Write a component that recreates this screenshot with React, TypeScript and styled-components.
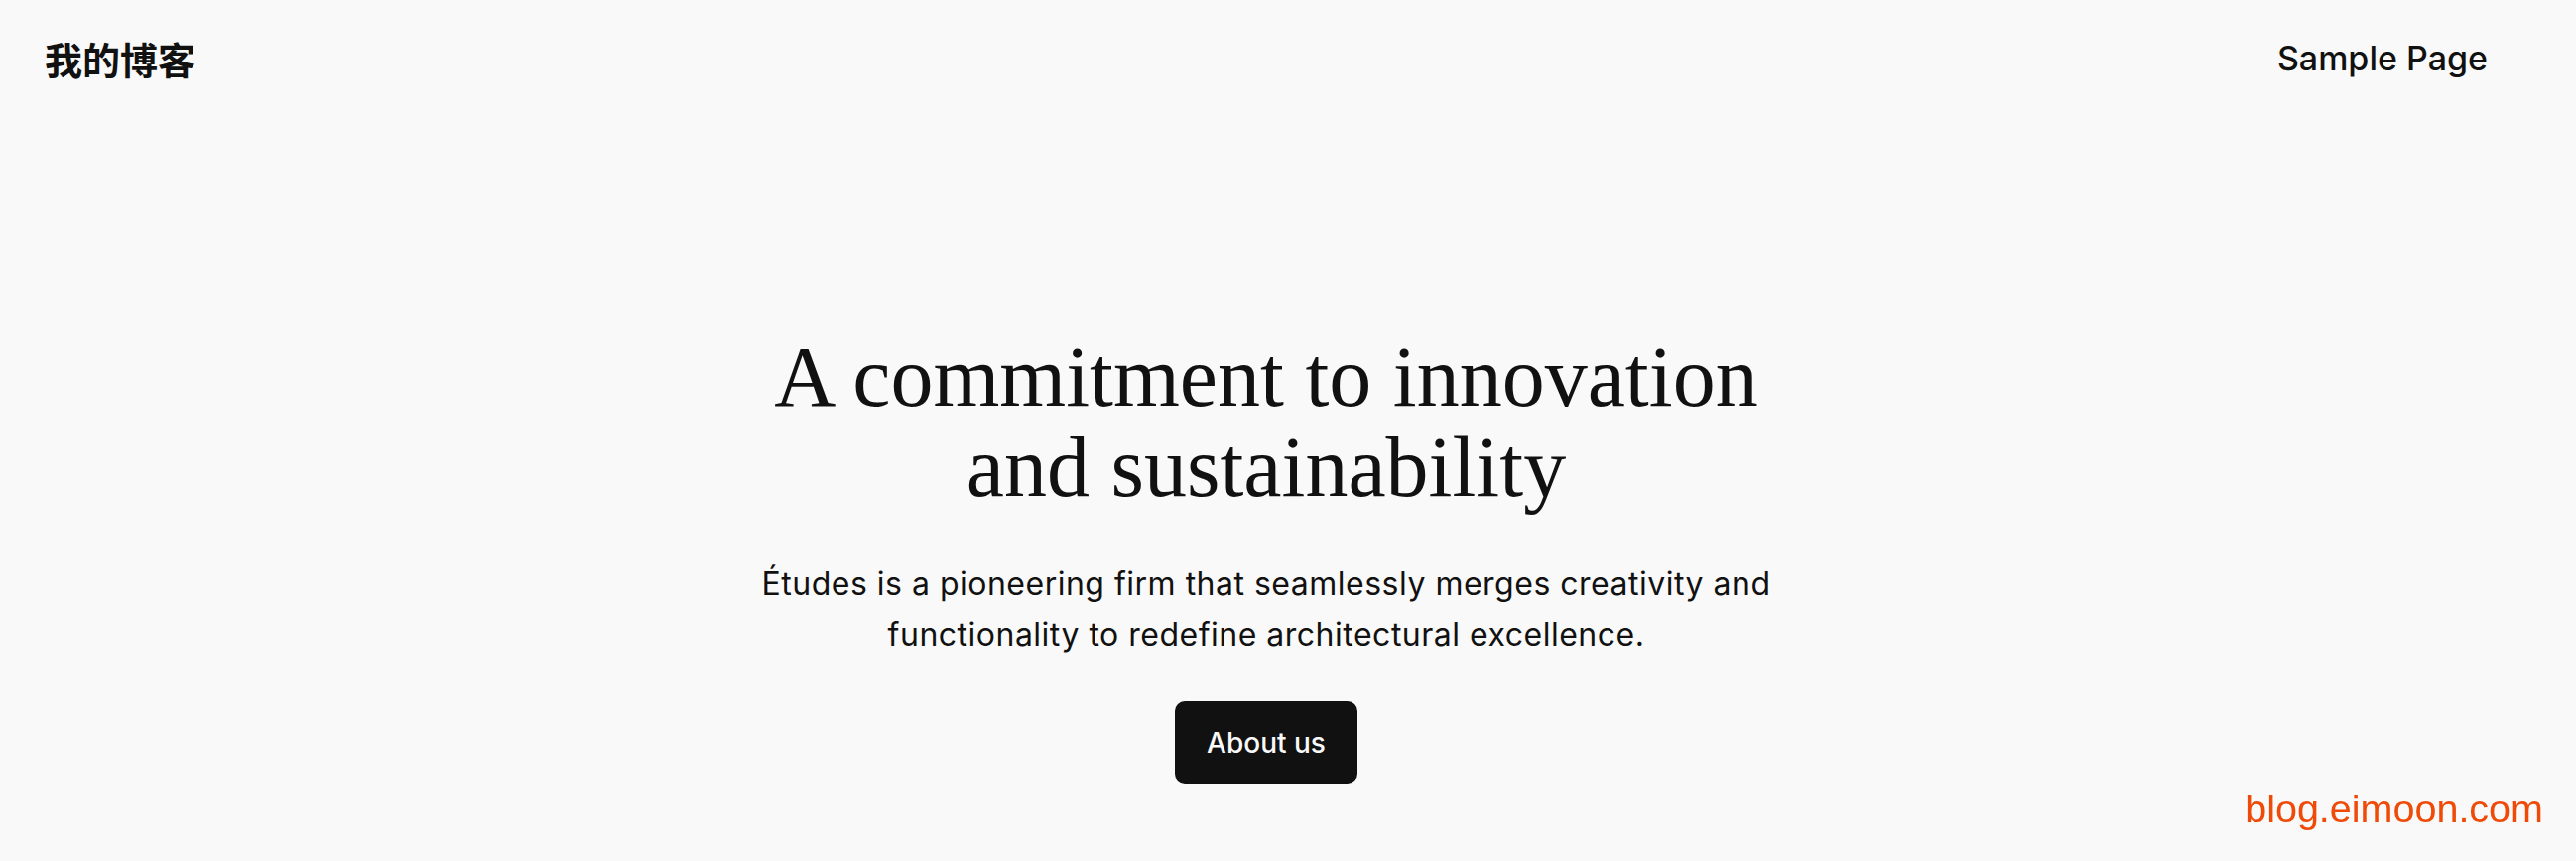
import React from 'react'
import styled, { createGlobalStyle } from 'styled-components'

const GlobalStyle = createGlobalStyle`
  html, body {
    margin: 0;
    padding: 0;
    background: #f9f9f9;
  }
  body {
    font-family: Inter, 'Liberation Sans', 'Noto Sans CJK SC', sans-serif;
    color: #111111;
    -webkit-font-smoothing: antialiased;
  }
`

const Page = styled.div`
  min-height: 868px;
  display: flex;
  flex-direction: column;
  padding: 0 89px 0 45px;
  background: #f9f9f9;
`

const Header = styled.header`
  height: 118px;
  display: flex;
  flex-direction: row;
  align-items: center;
  justify-content: space-between;
`

const SiteTitle = styled.a`
  font-family: 'Noto Sans CJK SC', sans-serif;
  font-weight: 700;
  font-size: 38px;
  line-height: 1;
  color: #111111;
  text-decoration: none;
`

const Nav = styled.nav`
  display: flex;
  flex-direction: row;
  gap: 40px;
`

const NavLink = styled.a`
  font-family: Inter, 'Liberation Sans', sans-serif;
  font-weight: 500;
  font-size: 34px;
  line-height: 1;
  color: #111111;
  text-decoration: none;
`

const Hero = styled.main`
  display: flex;
  flex-direction: column;
  align-items: center;
  padding-top: 217px;
`

const Heading = styled.h1`
  margin: 0;
  font-family: 'Liberation Serif', 'Times New Roman', serif;
  font-weight: 400;
  font-size: 86px;
  line-height: 91px;
  text-align: center;
  color: #111111;
`

const Lead = styled.p`
  margin: 46px 0 0;
  font-family: Inter, 'Liberation Sans', sans-serif;
  font-weight: 400;
  font-size: 32px;
  line-height: 51px;
  letter-spacing: 0.5px;
  text-align: center;
  color: #111111;
`

const Button = styled.a`
  margin-top: 42px;
  height: 83px;
  padding: 0 32px;
  display: flex;
  align-items: center;
  justify-content: center;
  box-sizing: border-box;
  background: #111111;
  border-radius: 10px;
  font-family: Inter, 'Liberation Sans', sans-serif;
  font-weight: 500;
  font-size: 28px;
  line-height: 1;
  color: #f9f9f9;
  text-decoration: none;
`

const Watermark = styled.div`
  position: fixed;
  right: 33px;
  bottom: 30px;
  font-family: 'Liberation Sans', Arial, sans-serif;
  font-size: 39.5px;
  color: #ef4a07;
`

const App = () => {
  return (
    <Page>
      <GlobalStyle />
      <Header>
        <SiteTitle href="#">我的博客</SiteTitle>
        <Nav>
          <NavLink href="#">Sample Page</NavLink>
        </Nav>
      </Header>
      <Hero>
        <Heading>
          A commitment to innovation
          <br />
          and sustainability
        </Heading>
        <Lead>
          Études is a pioneering firm that seamlessly merges creativity and
          <br />
          functionality to redefine architectural excellence.
        </Lead>
        <Button href="#">About us</Button>
      </Hero>
      <Watermark>blog.eimoon.com</Watermark>
    </Page>
  )
}

export default App
